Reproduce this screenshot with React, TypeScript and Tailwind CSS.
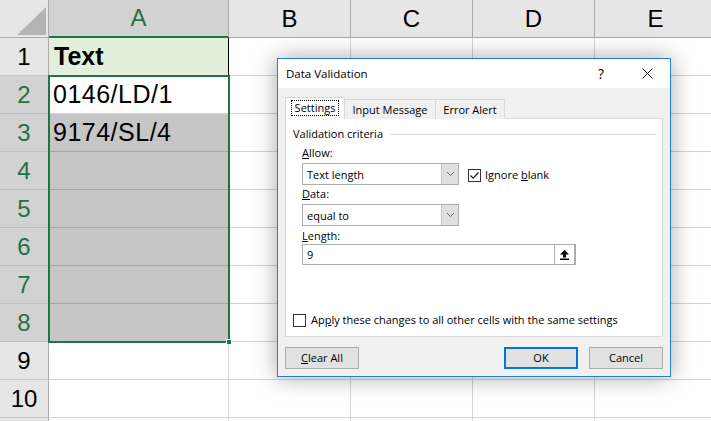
import React from 'react'

const rowNums = [1, 2, 3, 4, 5, 6, 7, 8, 9, 10, 11]

function Chevron() {
  return (
    <svg width="9" height="6" viewBox="0 0 9 6">
      <path d="M1 1 L4.5 4.5 L8 1" fill="none" stroke="#6d6d6d" strokeWidth="1" />
    </svg>
  )
}

function Select({ value }: { value: string }) {
  return (
    <div className="flex h-[22px] w-[157px] border border-[#adadad] bg-white">
      <div className="flex flex-1 items-center pl-[4px] leading-none">{value}</div>
      <div className="flex w-[17px] items-center justify-center border-l border-[#c4c4c4] bg-[#e0e0e0]">
        <Chevron />
      </div>
    </div>
  )
}

function CheckBox({ checked }: { checked?: boolean }) {
  return (
    <div className="flex h-[13px] w-[13px] shrink-0 items-center justify-center border border-[#333333] bg-white">
      {checked && (
        <svg width="11" height="11" viewBox="0 0 11 11">
          <path d="M1.5 5.5 L4.2 8.2 L9.5 2.5" fill="none" stroke="#222222" strokeWidth="1.2" />
        </svg>
      )}
    </div>
  )
}

function Sheet() {
  return (
    <div className="flex flex-col font-['Liberation_Sans',Arial,sans-serif] text-[24px] leading-none text-black">
      {/* column header */}
      <div className="flex h-[38px]">
        <div className="relative w-[49px] shrink-0 border-r border-b border-[#ababab] bg-[#e6e6e6]">
          <svg className="absolute left-0 top-0" width="49" height="38" viewBox="0 0 49 38">
            <polygon points="46,7 46,35 17,35" fill="#b4b4b4" />
          </svg>
        </div>
        <div className="flex w-[180px] shrink-0 items-center justify-center border-r border-b-2 border-r-[#ababab] border-b-[#217346] bg-[#d2d2d2] text-[#217346]">
          A
        </div>
        {['B', 'C', 'D', 'E'].map((c) => (
          <div
            key={c}
            className="flex w-[122px] shrink-0 items-center justify-center border-r border-b border-[#ababab] bg-[#e6e6e6]"
          >
            {c}
          </div>
        ))}
        <div className="flex-1 border-b border-[#ababab] bg-[#e6e6e6]" />
      </div>

      {rowNums.map((n) => {
        const sel = n >= 2 && n <= 8
        return (
          <div key={n} className="flex h-[38px] shrink-0">
            <div
              className={
                sel
                  ? 'flex w-[49px] shrink-0 items-center justify-center border-r border-b border-r-[#ababab] border-b-[#bdbdbd] bg-[#d2d2d2] text-[#217346]'
                  : 'flex w-[49px] shrink-0 items-center justify-center border-r border-b border-r-[#ababab] border-b-[#c8c8c8] bg-[#e6e6e6]'
              }
            >
              {n < 11 ? n : ''}
            </div>
            {n === 1 ? (
              <div className="flex w-[180px] shrink-0 items-center border-r border-b border-r-black border-b-[#d4d4d4] bg-[#e2efda] pl-[5px] text-[25px] font-bold">
                Text
              </div>
            ) : n === 2 ? (
              <div className="flex w-[180px] shrink-0 items-center border-r border-b border-[#d4d4d4] bg-white pl-[4px] text-[25px] tracking-[0.5px]">
                0146/LD/1
              </div>
            ) : sel ? (
              <div className="flex w-[180px] shrink-0 items-center border-r border-b border-r-[#d4d4d4] border-b-[#a6a6a6] bg-[#c6c6c6] pl-[4px] text-[25px] tracking-[0.5px]">
                {n === 3 ? '9174/SL/4' : ''}
              </div>
            ) : (
              <div className="w-[180px] shrink-0 border-r border-b border-[#d4d4d4] bg-white" />
            )}
            {[0, 1, 2, 3].map((c) => (
              <div key={c} className="w-[122px] shrink-0 border-r border-b border-[#d4d4d4] bg-white" />
            ))}
            <div className="flex-1 border-b border-[#d4d4d4] bg-white" />
          </div>
        )
      })}
    </div>
  )
}

function Dialog() {
  return (
    <div className="absolute left-[277px] top-[58px] flex h-[319px] w-[394px] flex-col border border-[#2b7cd3] bg-[#f0f0f0] font-['Open_Sans',sans-serif] text-[11px] leading-[16px] text-black shadow-[0_0_22px_rgba(0,0,0,0.35)]">
      {/* title bar */}
      <div className="flex h-[29px] shrink-0 items-center bg-white">
        <div className="pl-[8px] text-[11.5px]">Data Validation</div>
        <div className="ml-auto flex h-full w-[46px] items-center justify-center text-[14px]">?</div>
        <div className="flex h-full w-[46px] items-center justify-center">
          <svg width="11" height="11" viewBox="0 0 11 11">
            <path d="M0.5 0.5 L10.5 10.5 M10.5 0.5 L0.5 10.5" stroke="#111111" strokeWidth="1" />
          </svg>
        </div>
      </div>

      <div className="flex flex-1 flex-col px-[7px] pt-[9px]">
        {/* tabs */}
        <div className="relative z-10 flex h-[22px] items-end">
          <div className="flex h-[22px] w-[60px] items-start justify-center border border-b-0 border-[#d9d9d9] bg-white pt-[2px]">
            <span className="border border-dotted border-black px-[3px] leading-[14px]">Settings</span>
          </div>
          <div className="flex h-[20px] w-[91px] items-center justify-center border-t border-r border-[#d9d9d9] bg-[#f0f0f0]">
            Input Message
          </div>
          <div className="flex h-[20px] w-[69px] items-center justify-center border-t border-r border-[#d9d9d9] bg-[#f0f0f0]">
            Error Alert
          </div>
        </div>

        {/* panel */}
        <div className="-mt-px flex h-[219px] flex-col border border-[#d9d9d9] bg-white">
          <div className="flex items-center pl-[7px] pt-[7px]">
            <span>Validation criteria</span>
            <div className="ml-[6px] mr-[6px] h-px flex-1 bg-[#dcdcdc]" />
          </div>

          <div className="flex flex-col pl-[16px]">
            <div className="mt-[3px]">
              <span className="underline">A</span>llow:
            </div>
            <div className="mt-[2px] flex items-start">
              <Select value="Text length" />
              <div className="ml-[9px] mt-[4px] flex items-center gap-[4px]">
                <CheckBox checked />
                <span>
                  Ignore <span className="underline">b</span>lank
                </span>
              </div>
            </div>
            <div className="mt-[1px]">
              <span className="underline">D</span>ata:
            </div>
            <div className="mt-[2px]">
              <Select value="equal to" />
            </div>
            <div className="mt-[2px]">
              <span className="underline">L</span>ength:
            </div>
            <div className="flex h-[21px] w-[274px] border border-[#adadad] bg-white">
              <div className="flex flex-1 items-center pl-[4px]">9</div>
              <div className="flex w-[21px] items-center justify-center border-l border-r border-[#adadad] bg-white">
                <svg width="9" height="10" viewBox="0 0 9 10">
                  <polygon points="4.5,0 9,4.5 0,4.5" fill="#000000" />
                  <rect x="3" y="4" width="3" height="3.5" fill="#000000" />
                  <rect x="0" y="8.5" width="9" height="1.5" fill="#000000" />
                </svg>
              </div>
            </div>
          </div>

          <div className="mt-auto flex items-center gap-[5px] pb-[8px] pl-[7px]">
            <CheckBox />
            <span>
              Ap<span className="underline">p</span>ly these changes to all other cells with the same settings
            </span>
          </div>
        </div>

        {/* buttons */}
        <div className="mt-[10px] flex">
          <div className="flex h-[22px] w-[74px] items-center justify-center border border-[#adadad] bg-[#e1e1e1]">
            <span>
              <span className="underline">C</span>lear All
            </span>
          </div>
          <div className="ml-auto flex h-[22px] w-[74px] items-center justify-center border-2 border-[#0078d7] bg-[#e1e1e1]">
            OK
          </div>
          <div className="ml-[11px] flex h-[22px] w-[74px] items-center justify-center border border-[#adadad] bg-[#e1e1e1]">
            Cancel
          </div>
        </div>
      </div>
    </div>
  )
}

const App: React.FC = () => {
  return (
    <div className="relative h-[421px] w-[711px] overflow-hidden bg-white">
      <Sheet />
      {/* selection range A2:A8 */}
      <div className="absolute left-[48px] top-[75px] h-[268px] w-[182px] border-2 border-[#217346]" />
      <div className="absolute left-[226px] top-[339px] h-[6px] w-[6px] border border-white bg-[#217346]" />
      <Dialog />
    </div>
  )
}

export default App
